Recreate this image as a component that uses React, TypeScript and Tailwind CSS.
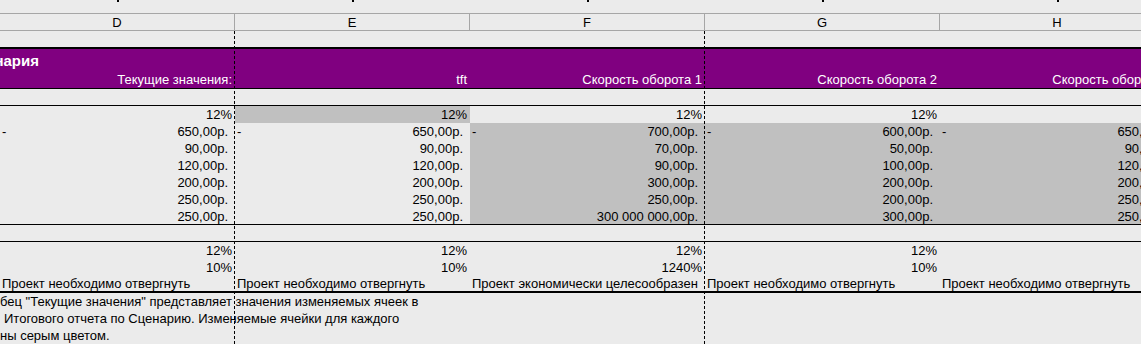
import React from "react";

type Cell = { v: string; neg?: boolean; gray?: boolean };

const colLetters = ["D", "E", "F", "G", "H"];

const purpleLabels = ["Текущие значения:", "tft", "Скорость оборота 1", "Скорость оборота 2", "Скорость оборота 3"];

const dataRows: { h: string; pct?: boolean; cells: Cell[] }[] = [
  {
    h: "h-[17px]",
    pct: true,
    cells: [{ v: "12%" }, { v: "12%", gray: true }, { v: "12%" }, { v: "12%" }, { v: "12%" }],
  },
  {
    h: "h-[17px]",
    cells: [
      { v: "650,00р.", neg: true },
      { v: "650,00р.", neg: true },
      { v: "700,00р.", neg: true, gray: true },
      { v: "600,00р.", neg: true, gray: true },
      { v: "650,00р.", neg: true, gray: true },
    ],
  },
  {
    h: "h-[17px]",
    cells: [{ v: "90,00р." }, { v: "90,00р." }, { v: "70,00р.", gray: true }, { v: "50,00р.", gray: true }, { v: "90,00р.", gray: true }],
  },
  {
    h: "h-[17px]",
    cells: [{ v: "120,00р." }, { v: "120,00р." }, { v: "90,00р.", gray: true }, { v: "100,00р.", gray: true }, { v: "120,00р.", gray: true }],
  },
  {
    h: "h-[17px]",
    cells: [{ v: "200,00р." }, { v: "200,00р." }, { v: "300,00р.", gray: true }, { v: "200,00р.", gray: true }, { v: "200,00р.", gray: true }],
  },
  {
    h: "h-[17px]",
    cells: [{ v: "250,00р." }, { v: "250,00р." }, { v: "250,00р.", gray: true }, { v: "200,00р.", gray: true }, { v: "250,00р.", gray: true }],
  },
  {
    h: "h-[16px]",
    cells: [
      { v: "250,00р." },
      { v: "250,00р." },
      { v: "300 000 000,00р.", gray: true },
      { v: "300,00р.", gray: true },
      { v: "250,00р.", gray: true },
    ],
  },
];

const resultPct = [
  { h: "h-[17px]", vals: ["12%", "12%", "12%", "12%", "12%"] },
  { h: "h-[16px]", vals: ["10%", "10%", "1240%", "10%", "10%"] },
];

const verdicts = [
  "Проект необходимо отвергнуть",
  "Проект необходимо отвергнуть",
  "Проект экономически целесообразен",
  "Проект необходимо отвергнуть",
  "Проект необходимо отвергнуть",
];

const notes = [
  { text: "бец \"Текущие значения\" представляет значения изменяемых ячеек в", pad: "pl-0" },
  { text: "Итогового отчета по Сценарию. Изменяемые ячейки для каждого", pad: "pl-[4px]" },
  { text: "ны серым цветом.", pad: "pl-0" },
];

const grid = "grid grid-cols-[repeat(5,235px)]";

function PageBreak({ left }: { left: string }) {
  return (
    <div
      className={`absolute top-[31px] bottom-0 w-px bg-[image:repeating-linear-gradient(to_bottom,#000_0_3px,transparent_3px_5px)] ${left}`}
    />
  );
}

export default function App() {
  return (
    <div className="relative w-[1141px] h-[344px] overflow-hidden bg-[#ebebeb] text-black text-[13px] leading-none font-['Liberation_Sans',Arial,sans-serif]">
      <div className="w-[1175px] flex flex-col">
        {/* top strip */}
        <div className={`${grid} h-[13px]`}>
          {colLetters.map((c) => (
            <div key={c} className="flex justify-center">
              <div className="w-[2px] h-[2px] bg-black" />
            </div>
          ))}
        </div>

        {/* column headers */}
        <div className={`${grid} h-[18px] border-y border-[#a6a6a6]`}>
          {colLetters.map((c) => (
            <div key={c} className="flex items-center justify-center border-r border-[#a6a6a6]">
              {c}
            </div>
          ))}
        </div>

        <div className="h-[16px]" />
        <div className="h-[2px] bg-black" />

        {/* purple title block */}
        <div className="h-[39px] bg-[#800080] text-white flex flex-col">
          <div className="h-[22px] flex items-center overflow-hidden">
            <div className="shrink-0 -ml-[200px] w-[239px] text-right font-bold text-[15px]">Структура сценария</div>
          </div>
          <div className={`${grid} h-[17px]`}>
            {purpleLabels.map((l, i) => (
              <div key={i} className="flex items-center justify-end pr-[3px] whitespace-nowrap">
                {l}
              </div>
            ))}
          </div>
        </div>
        <div className="h-px bg-black" />

        <div className="h-[16px]" />
        <div className="h-px bg-black" />

        {/* changing cells */}
        {dataRows.map((row, ri) => (
          <div key={ri} className={`${grid} ${row.h}`}>
            {row.cells.map((cell, ci) => (
              <div
                key={ci}
                className={`flex items-center whitespace-nowrap ${cell.gray ? "bg-[#c0c0c0]" : ""} ${
                  row.pct ? "justify-end pr-[3px]" : "justify-between pl-[2px] pr-[7px]"
                }`}
              >
                {!row.pct && <span>{cell.neg ? "-" : ""}</span>}
                <span>{cell.v}</span>
              </div>
            ))}
          </div>
        ))}
        <div className="h-px bg-black" />

        <div className="h-[16px]" />
        <div className="h-px bg-black" />

        {/* results */}
        {resultPct.map((r, ri) => (
          <div key={ri} className={`${grid} ${r.h}`}>
            {r.vals.map((v, ci) => (
              <div key={ci} className="flex items-center justify-end pr-[3px]">
                {v}
              </div>
            ))}
          </div>
        ))}
        <div className={`${grid} h-[16px]`}>
          {verdicts.map((v, ci) => (
            <div key={ci} className="flex items-center pl-[2px] whitespace-nowrap">
              {v}
            </div>
          ))}
        </div>
        <div className="h-[2px] bg-black" />

        {/* notes */}
        {notes.map((n, i) => (
          <div key={i} className={`h-[17px] flex items-center whitespace-nowrap ${n.pad}`}>
            {n.text}
          </div>
        ))}
      </div>

      <PageBreak left="left-[234px]" />
      <PageBreak left="left-[704px]" />
    </div>
  );
}
